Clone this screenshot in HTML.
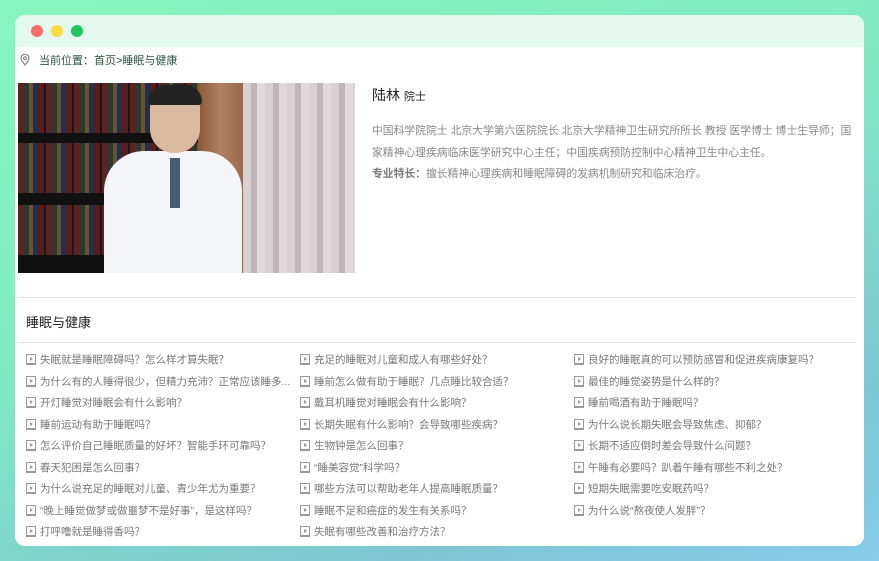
<!DOCTYPE html>
<html><head><meta charset="utf-8"><style>
*{margin:0;padding:0;box-sizing:border-box}
body{width:879px;height:561px;overflow:hidden;background:linear-gradient(160deg,#88f6bd 0%,#80e8c4 45%,#7cc6d2 80%,#86ccec 100%);font-family:"Liberation Sans","Noto Sans CJK SC",sans-serif;position:relative}
.win{position:absolute;left:15px;top:15px;width:849px;height:531px;background:#fff;border-radius:10px;overflow:hidden}
.bar{height:32px;background:#e3f9ee;position:relative}
.dot{position:absolute;top:10px;width:12px;height:12px;border-radius:50%}
.bc{position:absolute;left:5px;top:37px;font-size:11px;color:#2b5640;display:flex;align-items:center}
.photo{position:absolute;left:3px;top:68px;width:337px;height:190px;overflow:hidden;background:#1a1a1a}
.name{position:absolute;left:357px;top:70px;font-size:14px;color:#222}
.name small{font-size:11px}
.bio{position:absolute;left:357px;top:106px;width:490px;font-size:10.8px;color:#888;line-height:21.5px;white-space:nowrap}
.bio b{font-weight:bold;color:#777}
.hr{position:absolute;left:3px;width:838px;height:1px;background:#e2e2e2}
.st{position:absolute;left:11px;top:297px;font-size:13px;color:#222}
.it{position:absolute;font-size:10.5px;color:#777;white-space:nowrap;display:flex;align-items:center}
.it i{display:inline-block;width:10px;height:11px;border:1px solid #999;border-bottom-width:2px;margin-right:4px;position:relative}
.it i:after{content:"";position:absolute;left:3px;top:2px;border-left:3px solid #999;border-top:2px solid transparent;border-bottom:2px solid transparent}
</style></head><body>
<div class="win">
<div class="bar"><div class="dot" style="left:16px;background:#fd6b6b"></div><div class="dot" style="left:36px;background:#fddc3f"></div><div class="dot" style="left:56px;background:#1ec65e"></div></div>
<div class="bc"><svg width="10" height="12" viewBox="0 0 10 12"><path d="M5 11C2 7.5 1 6 1 4.2A4 4 0 0 1 9 4.2C9 6 8 7.5 5 11Z" fill="none" stroke="#777" stroke-width="1.1"/><circle cx="5" cy="4.3" r="1.4" fill="none" stroke="#777"/></svg><span style="margin-left:9px">当前位置：首页&gt;睡眠与健康</span></div>
<div class="photo">
<div style="position:absolute;left:0;top:0;width:180px;height:190px;background:repeating-linear-gradient(90deg,#5a2420 0 6px,#2a3a2e 6px 11px,#6a5230 11px 15px,#22304a 15px 20px,#5a1c1c 20px 26px,#181818 26px 28px)"></div>
<div style="position:absolute;left:0;top:50px;width:180px;height:10px;background:#111"></div>
<div style="position:absolute;left:0;top:110px;width:180px;height:12px;background:#111"></div>
<div style="position:absolute;left:0;top:172px;width:180px;height:18px;background:#111"></div>
<div style="position:absolute;left:180px;top:0;width:45px;height:190px;background:linear-gradient(90deg,#8a5a3a,#b08060,#9a6a4a)"></div>
<div style="position:absolute;left:225px;top:0;width:112px;height:190px;background:repeating-linear-gradient(90deg,#d8d0d2 0 8px,#c0b6b9 8px 14px,#e0d8da 14px 22px)"></div>
<div style="position:absolute;left:86px;top:68px;width:138px;height:130px;background:#f4f5f8;border-radius:40px 40px 0 0"></div>
<div style="position:absolute;left:152px;top:75px;width:10px;height:50px;background:#4a5a70"></div>
<div style="position:absolute;left:132px;top:5px;width:50px;height:65px;background:#d9b9a0;border-radius:20px 20px 24px 24px"></div>
<div style="position:absolute;left:130px;top:2px;width:54px;height:20px;background:#222;border-radius:20px 20px 4px 4px"></div>
</div>
<div class="name">陆林 <small>院士</small></div>
<div class="bio">中国科学院院士 北京大学第六医院院长 北京大学精神卫生研究所所长 教授 医学博士 博士生导师；国<br>家精神心理疾病临床医学研究中心主任；中国疾病预防控制中心精神卫生中心主任。<br><b>专业特长：</b>擅长精神心理疾病和睡眠障碍的发病机制研究和临床治疗。</div>
<div class="hr" style="top:282px"></div>
<div class="st">睡眠与健康</div>
<div class="hr" style="top:327px;left:3px"></div>
<div class="it" style="left:11px;top:337px"><i></i>失眠就是睡眠障碍吗？怎么样才算失眠？</div>
<div class="it" style="left:11px;top:359px"><i></i>为什么有的人睡得很少，但精力充沛？正常应该睡多...</div>
<div class="it" style="left:11px;top:380px"><i></i>开灯睡觉对睡眠会有什么影响？</div>
<div class="it" style="left:11px;top:402px"><i></i>睡前运动有助于睡眠吗？</div>
<div class="it" style="left:11px;top:423px"><i></i>怎么评价自己睡眠质量的好坏？智能手环可靠吗？</div>
<div class="it" style="left:11px;top:445px"><i></i>春天犯困是怎么回事？</div>
<div class="it" style="left:11px;top:466px"><i></i>为什么说充足的睡眠对儿童、青少年尤为重要？</div>
<div class="it" style="left:11px;top:488px"><i></i>“晚上睡觉做梦或做噩梦不是好事”，是这样吗？</div>
<div class="it" style="left:11px;top:509px"><i></i>打呼噜就是睡得香吗？</div>
<div class="it" style="left:285px;top:337px"><i></i>充足的睡眠对儿童和成人有哪些好处？</div>
<div class="it" style="left:285px;top:359px"><i></i>睡前怎么做有助于睡眠？几点睡比较合适？</div>
<div class="it" style="left:285px;top:380px"><i></i>戴耳机睡觉对睡眠会有什么影响？</div>
<div class="it" style="left:285px;top:402px"><i></i>长期失眠有什么影响？会导致哪些疾病？</div>
<div class="it" style="left:285px;top:423px"><i></i>生物钟是怎么回事？</div>
<div class="it" style="left:285px;top:445px"><i></i>“睡美容觉”科学吗？</div>
<div class="it" style="left:285px;top:466px"><i></i>哪些方法可以帮助老年人提高睡眠质量？</div>
<div class="it" style="left:285px;top:488px"><i></i>睡眠不足和癌症的发生有关系吗？</div>
<div class="it" style="left:285px;top:509px"><i></i>失眠有哪些改善和治疗方法？</div>
<div class="it" style="left:559px;top:337px"><i></i>良好的睡眠真的可以预防感冒和促进疾病康复吗？</div>
<div class="it" style="left:559px;top:359px"><i></i>最佳的睡觉姿势是什么样的？</div>
<div class="it" style="left:559px;top:380px"><i></i>睡前喝酒有助于睡眠吗？</div>
<div class="it" style="left:559px;top:402px"><i></i>为什么说长期失眠会导致焦虑、抑郁？</div>
<div class="it" style="left:559px;top:423px"><i></i>长期不适应倒时差会导致什么问题？</div>
<div class="it" style="left:559px;top:445px"><i></i>午睡有必要吗？趴着午睡有哪些不利之处？</div>
<div class="it" style="left:559px;top:466px"><i></i>短期失眠需要吃安眠药吗？</div>
<div class="it" style="left:559px;top:488px"><i></i>为什么说“熬夜使人发胖”？</div>
</div>
</body></html>
